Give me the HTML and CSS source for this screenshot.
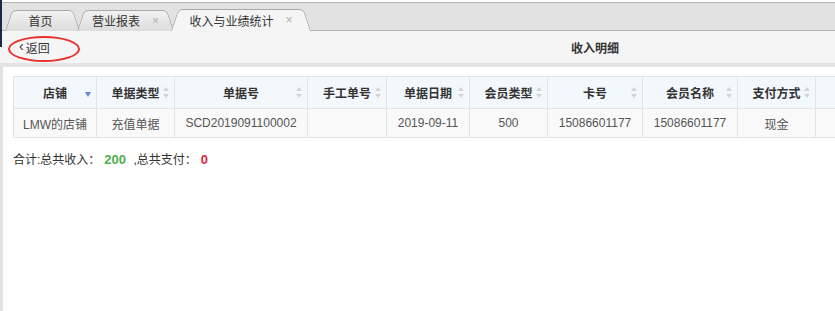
FILE: index.html
```html
<!DOCTYPE html>
<html lang="zh-CN">
<head>
  <meta charset="UTF-8" />
  <meta name="viewport" content="width=device-width, initial-scale=1.0"/>
  <title>收入明细</title>
  <link rel="stylesheet" href="styles.css">
</head>
<body>
  <div class="side-edge"></div>
  <div class="tabbar">
    <div class="tab tab-home"><span>首页</span></div>
    <div class="tab tab-report"><span>营业报表</span><i class="close">×</i></div>
    <div class="tab tab-income active"><span>收入与业绩统计</span><i class="close">×</i></div>
  </div>

  <div class="toolbar">
    <a class="back" href="#"><span class="chev">‹</span>返回</a>
    <div class="title">收入明细</div>
    <div class="ring"></div>
  </div>

  <div class="panel">
    <table class="grid">
      <thead>
        <tr>
          <th class="w1">店铺<i class="sort-desc"></i></th>
          <th class="w2">单据类型<i class="sort"></i></th>
          <th class="w3">单据号<i class="sort"></i></th>
          <th class="w4">手工单号<i class="sort"></i></th>
          <th class="w5">单据日期<i class="sort"></i></th>
          <th class="w6">会员类型<i class="sort"></i></th>
          <th class="w7">卡号<i class="sort"></i></th>
          <th class="w8">会员名称<i class="sort"></i></th>
          <th class="w9">支付方式<i class="sort"></i></th>
          <th class="w10">笔数<i class="sort"></i></th>
        </tr>
      </thead>
      <tbody>
        <tr>
          <td>LMW的店铺</td>
          <td>充值单据</td>
          <td>SCD2019091100002</td>
          <td></td>
          <td>2019-09-11</td>
          <td>500</td>
          <td>15086601177</td>
          <td>15086601177</td>
          <td>现金</td>
          <td></td>
        </tr>
      </tbody>
    </table>
    <div class="summary">
      合计:总共收入：<b class="in">200</b> ,总共支付：<b class="out">0</b>
    </div>
  </div>
</body>
</html>
```

FILE: styles.css
```css
html, body {
  margin: 0;
  padding: 0;
  height: 100%;
  overflow: hidden;
}
body {
  font-family: "Liberation Sans", "Noto Sans CJK SC", sans-serif;
  font-size: 12px;
  color: #333;
  background: #fff;
  position: relative;
  display: flex;
  flex-direction: column;
}
.side-edge {
  position: absolute;
  left: 0;
  top: 0;
  width: 2px;
  height: 47px;
  background: #1b2947;
  z-index: 5;
}
.tabbar {
  flex: none;
  margin-top: 2px;
  height: 27px;
  border-top: 1px solid #b4b4b4;
  border-bottom: 1px solid #b4b4b4;
  background: #e2e2e2;
  display: flex;
  align-items: flex-end;
  padding-left: 5px;
}
.tab {
  position: relative;
  height: 21px;
  margin-bottom: -1px;
  margin-right: -3px;
  display: flex;
  align-items: center;
  justify-content: center;
  color: #333;
}
.tab span, .tab .close {
  position: relative;
  z-index: 1;
}
.tab::before,
.tab::after {
  content: "";
  position: absolute;
  top: 0;
  bottom: 0;
  background: linear-gradient(#f2f2f2, #dcdcdc);
  border-top: 1px solid #a9a9a9;
}
.tab::before {
  left: 0;
  right: 45%;
  border-left: 1px solid #a9a9a9;
  border-radius: 5px 0 0 0;
  transform: skewX(-18deg);
  transform-origin: bottom left;
}
.tab::after {
  left: 45%;
  right: 0;
  border-right: 1px solid #a9a9a9;
  border-radius: 0 5px 0 0;
  transform: skewX(18deg);
  transform-origin: bottom right;
}
.tab.active {
  z-index: 2;
  height: 22px;
}
.tab.active::before,
.tab.active::after {
  background: #f5f5f5;
}
.tab-home { width: 75px; padding-right: 4px; box-sizing: border-box; }
.tab-report { width: 97px; z-index: 1; }
.tab-income { width: 140px; }
.close {
  font-style: normal;
  color: #b0b0b0;
  font-size: 12px;
  margin-left: 12px;
}
.toolbar {
  flex: none;
  position: relative;
  height: 32px;
  background: #f5f5f5;
  display: flex;
  align-items: center;
  border-bottom: 4px solid #e3e3e3;
}
.back {
  color: #333;
  text-decoration: none;
  margin-left: 19px;
  width: 60px;
  display: flex;
  align-items: center;
}
.chev {
  font-size: 14px;
  margin-right: 2px;
  margin-top: -2px;
}
.title {
  margin-left: 492px;
  color: #333;
  font-weight: bold;
}
.ring {
  position: absolute;
  left: 8px;
  top: 5px;
  width: 68px;
  height: 22px;
  border: 2px solid #e8302c;
  border-radius: 50%;
}
.panel {
  flex: 1;
  min-height: 0;
  overflow: hidden;
  border-left: 3px solid #e2e2e2;
  padding: 9px 0 0 10px;
  background: #fff;
}
.grid {
  border-collapse: collapse;
}
.grid th, .grid td {
  border: 1px solid #e3e3e3;
  text-align: center;
  white-space: nowrap;
  overflow: hidden;
  padding: 0;
  box-sizing: border-box;
}
.grid th {
  position: relative;
  height: 32px;
  background: #f3f8fd;
  font-weight: bold;
  color: #333;
}
.grid td {
  height: 29px;
  background: #f9f9f9;
  color: #555;
}
.w1 { width: 83px; min-width: 83px; }
.w2 { width: 78px; min-width: 78px; }
.w3 { width: 133px; min-width: 133px; }
.w4 { width: 79px; min-width: 79px; }
.w5 { width: 83px; min-width: 83px; }
.w6 { width: 78px; min-width: 78px; }
.w7 { width: 95px; min-width: 95px; }
.w8 { width: 95px; min-width: 95px; }
.w9 { width: 78px; min-width: 78px; }
.w10 { width: 83px; min-width: 83px; }
.sort {
  position: absolute;
  right: 4px;
  top: 10px;
  width: 7px;
  height: 11px;
}
.sort::before,
.sort::after {
  content: "";
  position: absolute;
  left: 0;
  border-left: 3px solid transparent;
  border-right: 3px solid transparent;
}
.sort::before {
  top: 0;
  border-bottom: 4px solid #d4d4d4;
}
.sort::after {
  bottom: 0;
  border-top: 4px solid #d4d4d4;
}
.sort-desc {
  position: absolute;
  right: 5px;
  top: 15px;
  border-left: 3px solid transparent;
  border-right: 3px solid transparent;
  border-top: 5px solid #6b7fd7;
}
.summary {
  margin-top: 12px;
  color: #333;
}
.summary b {
  font-size: 13px;
  margin: 0 4px 0 4px;
}
.in { color: #4cae4c; }
.out { color: #e0263c; }
```
